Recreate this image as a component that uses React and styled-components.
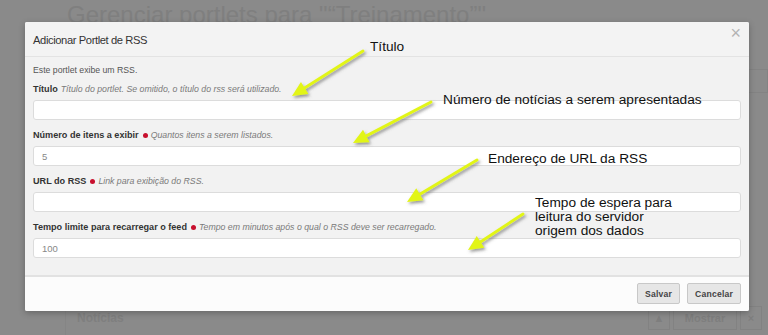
import styled, {createGlobalStyle} from 'styled-components'

const GlobalStyle = createGlobalStyle`
  html, body {
    margin: 0;
    padding: 0;
    background: #8a8a8a;
  }
  body {
    font-family: "Liberation Sans", Arial, sans-serif;
  }
`

const fields = [
  {label: 'Título', help: 'Título do portlet. Se omitido, o título do rss será utilizado.', value: ''},
  {label: 'Número de itens a exibir', required: true, help: 'Quantos itens a serem listados.', value: '5'},
  {label: 'URL do RSS', required: true, help: 'Link para exibição do RSS.', value: ''},
  {
    label: 'Tempo limite para recarregar o feed',
    required: true,
    help: 'Tempo em minutos após o qual o RSS deve ser recarregado.',
    value: '100',
  },
]

const notes = [
  {x: 370, y: 40, text: 'Título', tail: [363, 51], tip: [292, 96]},
  {x: 443, y: 93, text: 'Número de notícias a serem apresentadas', tail: [431, 102], tip: [353, 143]},
  {x: 488, y: 152, text: 'Endereço de URL da RSS', tail: [477, 160], tip: [407, 202]},
  {x: 535, y: 196, text: 'Tempo de espera para\nleitura do servidor\norigem dos dados', tail: [523, 214], tip: [468, 250]},
]

const arrowHead = (tail, tip) => {
  const dx = tip[0] - tail[0]
  const dy = tip[1] - tail[1]
  const len = Math.hypot(dx, dy)
  const ux = dx / len
  const uy = dy / len
  const back = 15
  const half = 7
  const bx = tip[0] - ux * back
  const by = tip[1] - uy * back
  return {
    base: [bx + ux * 2, by + uy * 2],
    points: `${tip[0]},${tip[1]} ${bx - uy * half},${by + ux * half} ${bx + uy * half},${by - ux * half}`,
  }
}

function App() {
  return (
    <Screen>
      <GlobalStyle />
      <Backdrop>
        <PageTitle>Gerenciar portlets para "“Treinamento”"</PageTitle>
        <SideBox />
        <BottomRow>
          <SectionName>Notícias</SectionName>
          <ButtonGroup>
            <GhostButton>▲</GhostButton>
            <GhostButton wide>Mostrar</GhostButton>
            <GhostButton>×</GhostButton>
          </ButtonGroup>
        </BottomRow>
      </Backdrop>

      <Modal>
        <Header>
          <HeaderTitle>Adicionar Portlet de RSS</HeaderTitle>
          <Close>×</Close>
        </Header>
        <Body>
          <Intro>Este portlet exibe um RSS.</Intro>
          {fields.map(f => (
            <Field key={f.label}>
              <LabelRow>
                <Label>{f.label}</Label>
                {f.required && <Required />}
                <Help>{f.help}</Help>
              </LabelRow>
              <Input defaultValue={f.value} />
            </Field>
          ))}
        </Body>
        <Footer>
          <Button>Salvar</Button>
          <Button>Cancelar</Button>
        </Footer>
      </Modal>

      <Notes>
        <svg width="768" height="335" viewBox="0 0 768 335">
          <defs>
            <filter id="shade" x="-20%" y="-20%" width="140%" height="140%">
              <feDropShadow dx="1.5" dy="2" stdDeviation="1.5" floodColor="#555" floodOpacity="0.6" />
            </filter>
          </defs>
          {notes.map(n => {
            const h = arrowHead(n.tail, n.tip)
            return (
              <g key={n.text} filter="url(#shade)">
                <line
                  x1={n.tail[0]}
                  y1={n.tail[1]}
                  x2={h.base[0]}
                  y2={h.base[1]}
                  stroke="#e2f514"
                  strokeWidth="3"
                  strokeLinecap="round"
                />
                <polygon points={h.points} fill="#e2f514" />
              </g>
            )
          })}
        </svg>
        {notes.map(n => (
          <NoteText key={n.text} style={{left: n.x, top: n.y}}>
            {n.text}
          </NoteText>
        ))}
      </Notes>
    </Screen>
  )
}

export default App

const Screen = styled.div`
  position: relative;
  width: 768px;
  height: 335px;
  overflow: hidden;
  background: #8a8a8a;
`

const Backdrop = styled.div`
  height: 335px;
  display: flex;
  flex-direction: column;
  color: #808080;
`

const PageTitle = styled.div`
  font-size: 24px;
  line-height: 28px;
  padding: 1px 0 0 67px;
  color: #7f7f7f;
  white-space: nowrap;
`

const SideBox = styled.div`
  margin: 40px 0 0 748px;
  height: 22px;
  border: 1px solid #838383;
`

const BottomRow = styled.div`
  margin-top: auto;
  margin-left: 65px;
  display: flex;
  align-items: flex-end;
  justify-content: space-between;
  padding: 0 6px 5px 11px;
  border-left: 1px solid #858585;
`

const SectionName = styled.div`
  font-size: 12px;
  font-weight: bold;
  color: #7f7f7f;
  padding-bottom: 5px;
`

const ButtonGroup = styled.div`
  display: flex;
  gap: 3px;
`

const GhostButton = styled.div`
  height: 22px;
  width: ${p => (p.wide ? '62px' : '20px')};
  border: 1px solid #828282;
  font-size: 11px;
  font-weight: bold;
  color: #7e7e7e;
  display: flex;
  align-items: center;
  justify-content: center;
`

const Modal = styled.div`
  position: absolute;
  left: 25px;
  top: 22px;
  width: 724px;
  background: #f2f2f2;
  border-radius: 2px;
  box-shadow: 0 2px 6px rgba(0, 0, 0, 0.25);
  overflow: hidden;
`

const Header = styled.div`
  position: relative;
  height: 35px;
  display: flex;
  align-items: center;
  padding: 1px 8px 0;
  border-bottom: 1px solid #e3e3e3;
  background: #f3f3f3;
  box-sizing: border-box;
`

const HeaderTitle = styled.div`
  font-size: 11.2px;
  letter-spacing: -0.4px;
  color: #333;
`

const Close = styled.div`
  position: absolute;
  right: 8px;
  top: 2px;
  font-size: 18px;
  line-height: 18px;
  color: #b3b3b3;
`

const Body = styled.div`
  padding: 6px 8px 17px;
`

const Intro = styled.div`
  font-size: 8.7px;
  line-height: 14px;
  color: #555;
  margin-bottom: 5px;
`

const Field = styled.div`
  & + & {
    margin-top: 8px;
  }
`

const LabelRow = styled.div`
  display: flex;
  align-items: center;
  height: 14px;
  margin-bottom: 4px;
  white-space: nowrap;
`

const Label = styled.span`
  font-size: 9.1px;
  font-weight: bold;
  color: #333;
  margin-right: 3px;
`

const Required = styled.span`
  width: 5px;
  height: 5px;
  border-radius: 50%;
  background: #c8102e;
  margin: 1px 3px 0 1px;
`

const Help = styled.span`
  font-size: 8.75px;
  font-style: italic;
  color: #7a7a7a;
`

const Input = styled.input`
  display: block;
  width: 100%;
  height: 20px;
  box-sizing: border-box;
  border: 1px solid #dcdcdc;
  border-radius: 3px;
  background: #fff;
  padding: 0 8px;
  font-family: "Liberation Sans", Arial, sans-serif;
  font-size: 9.5px;
  color: #888;
  outline: none;
`

const Footer = styled.div`
  height: 36px;
  box-sizing: border-box;
  border-top: 2px solid #e2e2e2;
  background: #fcfcfc;
  display: flex;
  align-items: center;
  justify-content: flex-end;
  gap: 7px;
  padding: 0 8px 1px;
`

const Button = styled.button`
  height: 21px;
  padding: 0 7px;
  border: 1px solid #c8c8c8;
  border-radius: 2px;
  background: #e6e6e6;
  font-family: "Liberation Sans", Arial, sans-serif;
  font-size: 8.6px;
  font-weight: bold;
  color: #444;
  letter-spacing: 0.2px;
`

const Notes = styled.div`
  position: absolute;
  inset: 0;
  pointer-events: none;

  svg {
    position: absolute;
    left: 0;
    top: 0;
  }
`

const NoteText = styled.div`
  position: absolute;
  font-size: 13.7px;
  line-height: 14px;
  color: #111;
  white-space: pre;
`
